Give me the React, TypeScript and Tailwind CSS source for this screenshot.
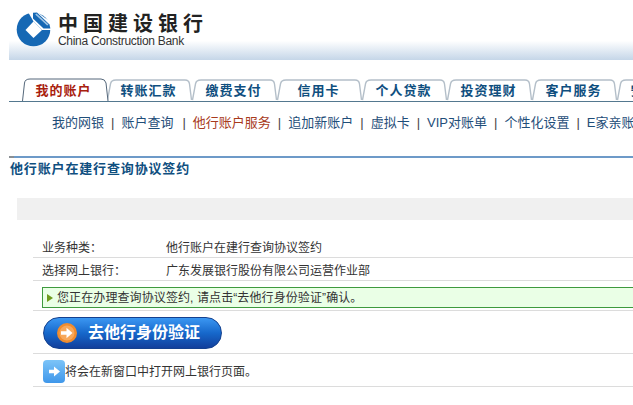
import React from "react";

const tabs = ["我的账户", "转账汇款", "缴费支付", "信用卡", "个人贷款", "投资理财", "客户服务", "安全中心"];
const links = ["我的网银", "账户查询", "他行账户服务", "追加新账户", "虚拟卡", "VIP对账单", "个性化设置", "E家亲账户"];

function Logo() {
  return (
    <svg width="36" height="36" viewBox="0 0 36 36" className="shrink-0">
      <circle cx="17.5" cy="18.5" r="16.8" fill="#1668b4" />
      <path d="M17.5 10.5 L26 19 L17.5 27 L9.5 19 Z" fill="#fff" />
      <path d="M17.5 10.5 L26 19 L36 19 L36 12 L21 1 L12 1 Z" fill="#fff" />
      <path d="M17 1.8 L21 1.6 L33.5 13.5 L34.4 17.5 L27.5 17.5 L17 7.5 Z" fill="#1668b4" />
      <path d="M20.5 2.5 L32.5 13.5 L31.2 14.5 L19.2 3.4 Z" fill="#9fc4e4" />
    </svg>
  );
}

function Tab({ label, active }: { label: string; active: boolean }) {
  return (
    <div className={`relative flex w-[85px] shrink-0 items-center justify-center pr-[2px] pt-[2px] ${active ? "z-10 h-[23px]" : "h-[22px]"}`}>
      <svg width="92" height="23" viewBox="0 0 92 23" className="absolute bottom-0 left-0" fill="none">
        {active ? (
          <path d="M0.5 23 L2.5 5 Q3 1 8 1 L79 1 Q83 1 84 5 L86 23" fill="#fff" stroke="#54677a" />
        ) : (
          <path d="M0.5 22 L3.5 6 Q4 2 9 2 L78 2 Q82 2 82.5 6 L84.5 22" fill="#fff" stroke="#b4bfc9" strokeWidth="1.4" />
        )}
      </svg>
      <span className={`relative text-[13px] font-bold tracking-[1px] ${active ? "text-[#a8200d]" : "text-[#0f4f7f]"}`}>{label}</span>
    </div>
  );
}

function InfoRow({ label, value }: { label: string; value: string }) {
  return (
    <div className="flex h-[23px] items-center border-b border-[#dcdcdc] pl-[9px] pt-[3px] text-xs text-[#333]">
      <span className="w-[124px] shrink-0">{label}</span>
      <span>{value}</span>
    </div>
  );
}

export default function App() {
  return (
    <div
      className="h-[405px] w-[633px] overflow-hidden bg-white"
      style={{ fontFamily: '"Liberation Sans", "Noto Sans CJK SC", sans-serif' }}
    >
      {/* Bank header */}
      <header className="ml-[9px] flex h-[60px] items-start gap-[6px] bg-gradient-to-b from-white from-[68%] to-[#c5d6e8] pl-[7px] pt-[11px]">
        <Logo />
        <div className="pt-[2px]">
          <div className="whitespace-nowrap text-[20px] font-bold leading-[22px] tracking-[5px] text-[#222]">中国建设银行</div>
          <div className="whitespace-nowrap text-[12px] leading-[12px] tracking-[-0.3px] text-[#333]">China Construction Bank</div>
        </div>
      </header>

      {/* Main tabs */}
      <nav className="ml-[9px] mt-[19px] flex h-[23px] items-end border-b border-[#54788f] pl-[13px]">
        {tabs.map((t, i) => (
          <Tab key={t} label={t} active={i === 0} />
        ))}
      </nav>

      {/* Sub navigation */}
      <div className="flex h-[40px] items-center whitespace-nowrap pl-[52px] pt-[1px] text-[13px] text-[#1f4e79]">
        {links.map((l, i) => (
          <React.Fragment key={l}>
            {i > 0 && <span className={`pr-[7px] text-[#444] ${i === 2 ? "pl-[9px]" : "pl-[7px]"}`}>|</span>}
            <span className={i === 2 ? "text-[#a83a1c]" : ""}>{l}</span>
          </React.Fragment>
        ))}
      </div>

      <div className="ml-[9px] mt-[14px] flex h-[2px] bg-[#6d9ac8]">
        <div className="w-[5px] bg-[#8a8f94]" />
      </div>
      <h1 className="ml-[10px] mt-[2px] text-[13px] font-bold leading-[18px] tracking-[0.85px] text-[#0f4f7f]">他行账户在建行查询协议签约</h1>

      <div className="ml-[17px] mt-[20px] h-[22px] bg-[#f0f0f0]" />

      {/* Form rows */}
      <div className="ml-[33px] mt-[15px]">
        <InfoRow label="业务种类：" value="他行账户在建行查询协议签约" />
        <InfoRow label="选择网上银行：" value="广东发展银行股份有限公司运营作业部" />

        <div className="border-b border-[#dcdcdc] pb-[2px] pl-[9px] pt-[6px]">
          <div className="-mr-[8px] flex h-[21px] items-center gap-[3px] border border-[#3e9a3e] bg-[#eaffe6] pl-[4px] pt-[1px] text-xs text-[#333]">
            <span className="h-0 w-0 border-y-[4px] border-l-[6px] border-y-transparent border-l-[#6f9a1e]" />
            <span className="ml-[1px] whitespace-nowrap tracking-[0.1px]">您正在办理查询协议签约, 请点击“去他行身份验证”确认。</span>
          </div>
        </div>

        <div className="border-b border-[#dcdcdc] pb-[4px] pl-[10px] pt-[6px]">
          <button className="flex h-[32px] w-[179px] items-center rounded-full border border-[#14418f] bg-gradient-to-b from-[#3b97f2] via-[#1668cb] to-[#123f9c] pl-[11px]">
            <svg width="24" height="24" viewBox="0 0 24 24" className="shrink-0">
              <circle cx="12" cy="12" r="10" fill="#f08c2e" />
              <circle cx="12" cy="12" r="7.5" fill="#f7a85a" />
              <path d="M6 10.2 H11.5 V6.8 L17.5 12 L11.5 17.2 V13.8 H6 Z" fill="#fff" />
            </svg>
            <span className="ml-[9px] whitespace-nowrap text-base font-bold leading-none text-white">去他行身份验证</span>
          </button>
        </div>

        <div className="flex h-[33px] items-center border-b border-[#dcdcdc] pl-[10px] pt-[3px] text-xs text-[#333]">
          <svg width="22" height="23" viewBox="0 0 22 23" className="shrink-0">
            <defs>
              <linearGradient id="arrowBox" x1="0" y1="0" x2="0" y2="1">
                <stop offset="0" stopColor="#7cc4f8" />
                <stop offset="1" stopColor="#3f97ea" />
              </linearGradient>
            </defs>
            <rect width="22" height="23" rx="4" fill="url(#arrowBox)" />
            <path d="M6 9.8 H11 V6.5 L17 11.5 L11 16.5 V13.2 H6 Z" fill="#fff" />
          </svg>
          <span className="whitespace-nowrap">将会在新窗口中打开网上银行页面。</span>
        </div>
      </div>
    </div>
  );
}
